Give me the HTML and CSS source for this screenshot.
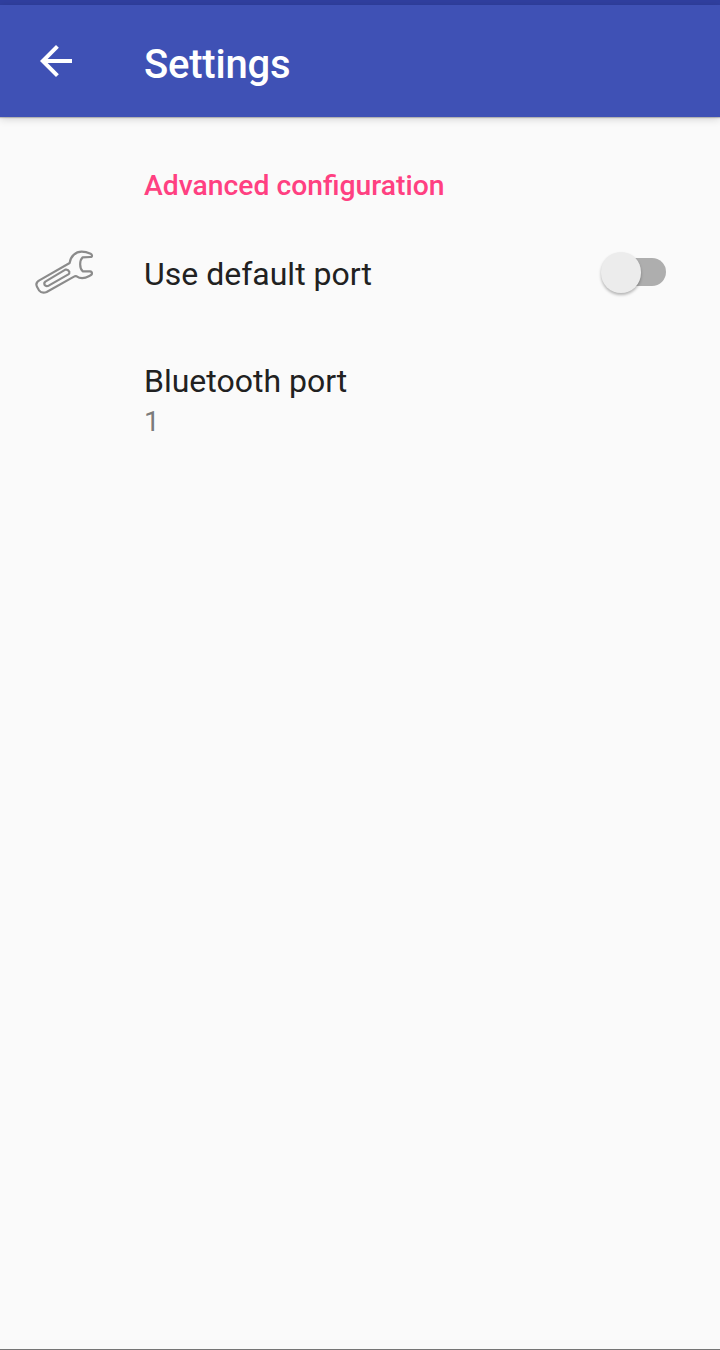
FILE: index.html
```html
<!DOCTYPE html>
<html lang="en">
<head>
<meta charset="utf-8">
<title>Settings</title>
<link rel="stylesheet" href="styles.css">
</head>
<body>
<div class="screen">
  <div class="status-bar"></div>
  <header class="app-bar">
    <svg class="back" viewBox="0 0 24 24"><path fill="#fff" d="M20 11H7.83l5.59-5.59L12 4l-8 8 8 8 1.41-1.41L7.83 13H20v-2z"/></svg>
    <h1 class="title">Settings</h1>
  </header>
  <main class="list">
    <h2 class="category">Advanced configuration</h2>
    <div class="row row-switch">
      <svg class="wrench" viewBox="0 0 270 195" fill="none" stroke="#8b8b8b" stroke-width="6.5" stroke-linejoin="round">
        <path d="M149 69C151 49 167 35 185 35C197 35 205 38 212 41Q216 43 216 47Q216 51 211 51L188 52C178 62 178 84 188 94L210 94Q216 95 216 100Q216 105 208 108C195 115 180 116 170 109Q166 107 162 110L80 156Q66 162 57 151L51 140Q45 129 58 121Z"/>
        <path d="M76 125L136 89Q144 87 148 95Q149 100 145 103L86 137Q78 140 74 135Q71 129 76 125Z"/>
      </svg>
      <span class="label">Use default port</span>
      <span class="switch"><span class="thumb"></span></span>
    </div>
    <div class="row row-value">
      <span class="label">Bluetooth port</span>
      <span class="value">1</span>
    </div>
  </main>
  <div class="nav-edge"></div>
</div>
</body>
</html>
```
FILE: styles.css
```css
* { box-sizing: border-box; }
body { margin: 0; font-family: Roboto, sans-serif; background: #fafafa; }
.screen { width: 720px; height: 1350px; display: flex; flex-direction: column; overflow: hidden; }
.status-bar { height: 5px; background: #303f9f; }
.app-bar { height: 112px; display: flex; align-items: center; padding-left: 32px; background: #3f51b5; box-shadow: 0 1px 1px rgba(0,0,0,.2), 0 2px 8px rgba(0,0,0,.16); }
.back { width: 48px; height: 48px; margin-right: 64px; }
.title { margin: 7px 0 0; font-size: 40px; line-height: 48px; font-weight: 500; color: #fff; letter-spacing: -.2px; }
.list { flex: 1; }
.category { margin: 52px 0 0 144px; font-size: 28.3px; line-height: 34px; font-weight: 500; color: #ff4081; }
.row { display: flex; }
.row-switch { height: 96px; margin-top: 21px; align-items: center; padding: 0 54px 0 20px; }
.wrench { width: 90px; height: 65px; margin-right: 34px; }
.label { font-size: 32px; line-height: 38px; color: #212121; }
.row-switch .label { padding-top: 4px; }
.switch { position: relative; width: 56px; height: 28px; margin-left: auto; border-radius: 14px; background: #aeaeae; }
.thumb { position: absolute; left: -9.5px; top: -6px; width: 40.5px; height: 40.5px; border-radius: 50%; background: #ececec; box-shadow: 0 2px 3px rgba(0,0,0,.28); }
.row-value { flex-direction: column; padding: 42px 0 0 144px; }
.value { font-size: 28px; line-height: 34px; margin-top: 5px; color: #7b7b7b; }
.nav-edge { height: 1px; background: #757575; }
```
